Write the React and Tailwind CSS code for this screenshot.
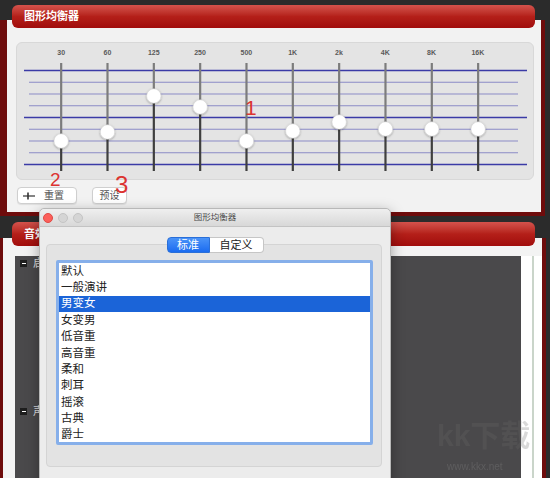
import React from 'react';

const freqs = ['30', '60', '125', '250', '500', '1K', '2k', '4K', '8K', '16K'];
// knob y positions (svg coords)
const knobs = [81, 72, 36, 47, 81, 71, 62, 69, 69, 69];
const presets = ['默认', '一般演讲', '男变女', '女变男', '低音重', '高音重', '柔和', '刺耳', '摇滚', '古典', '爵士'];

function EqGraph() {
  const thick = [10.5, 57.5, 104.5];
  const thin = [22.25, 34, 45.75, 69.25, 81, 92.75];
  return (
    <svg width="518" height="116" viewBox="0 0 518 116" className="block">
      <defs>
        <filter id="knobShadow" x="-50%" y="-50%" width="200%" height="200%">
          <feDropShadow dx="0" dy="0.8" stdDeviation="0.9" floodColor="#000" floodOpacity="0.35" />
        </filter>
      </defs>
      {thin.map((y) => (
        <line key={y} x1="12" x2="501" y1={y} y2={y} stroke="#8b8bc6" strokeWidth="1" />
      ))}
      {thick.map((y) => (
        <line key={y} x1="7" x2="510" y1={y} y2={y} stroke="#3b3ba6" strokeWidth="1.6" />
      ))}
      {knobs.map((ky, i) => {
        const x = 44.17 + i * 46.33;
        return (
          <g key={i}>
            <line x1={x} x2={x} y1="3" y2={ky} stroke="#7c7c7c" strokeWidth="2.2" />
            <line x1={x} x2={x} y1={ky} y2="111" stroke="#3f3f3f" strokeWidth="2.2" />
            <circle cx={x} cy={ky} r="7.2" fill="#fff" stroke="#d0d0d0" strokeWidth="0.5" filter="url(#knobShadow)" />
          </g>
        );
      })}
    </svg>
  );
}

export default function App() {
  return (
    <div className="relative w-[550px] h-[478px] overflow-hidden bg-[#2b2b2b] font-['Liberation_Sans','Noto_Sans_CJK_SC',sans-serif]">
      {/* 上半部分：图形均衡器 */}
      <div className="pt-[5px]">
        <div className="relative z-10 ml-[12px] w-[523px] h-[23px] rounded-[6px] bg-gradient-to-b from-[#d4524c] via-[#b41f19] to-[#a10c0c] flex items-center pl-[12px] text-white text-[11px] font-bold">
          图形均衡器
        </div>
        <div className="-mt-[8px] w-[545px] h-[196px] border-l-[7px] border-r-[4px] border-b-[4px] border-[#6e0c0c] bg-[#f2f2f2] pl-[9px] pt-[22px]">
          <div className="w-[518px] h-[138px] rounded-[6px] bg-[#e4e4e4] border border-[#d8d8d8] pt-[5px]">
            <div className="ml-[21px] w-[463px] grid grid-cols-10 h-[10px] leading-[10px] text-[7px] font-bold text-[#5a5a5a]">
              {freqs.map((f) => (
                <div key={f} className="text-center">{f}</div>
              ))}
            </div>
            <div className="mt-[2px]">
              <EqGraph />
            </div>
          </div>
          <div className="mt-[7px] ml-[1px] flex gap-[15px]">
            <button className="w-[60px] h-[17px] rounded-[4px] bg-white border border-[#cfcfcf] shadow-[0_1px_1px_rgba(0,0,0,0.08)] flex items-center pl-[5px] gap-[9px] text-[10px] text-[#555]">
              <svg width="12" height="8" viewBox="0 0 12 8">
                <line x1="0" x2="12" y1="4" y2="4" stroke="#333" strokeWidth="1.2" />
                <line x1="5" x2="5" y1="0.5" y2="7.5" stroke="#333" strokeWidth="1.6" />
              </svg>
              重置
            </button>
            <button className="w-[35px] h-[17px] rounded-[4px] bg-white border border-[#cfcfcf] shadow-[0_1px_1px_rgba(0,0,0,0.08)] flex items-center justify-center text-[10px] text-[#555]">
              预设
            </button>
          </div>
        </div>
      </div>

      {/* 下半部分：音效 */}
      <div className="mt-[6px]">
        <div className="relative z-10 ml-[12px] w-[523px] h-[24px] rounded-[6px] bg-gradient-to-b from-[#d4524c] via-[#b41f19] to-[#a10c0c] flex items-center pl-[12px] text-white text-[11px] font-bold">
          音效设置
        </div>
        <div className="-mt-[8px] w-[546px] h-[260px] border-l-[3px] border-r-[4px] border-[#6e0c0c] bg-[#f3f3f3] pl-[12px] pt-[18px] flex">
          <div className="w-[506px] h-full bg-[#4a494b] pl-[5px] pt-[3px] text-[11px] text-[#ddd]">
            <div className="flex items-center gap-[6px] h-[8px]">
              <span className="w-[7px] h-[7px] bg-[#1e1e1e] flex items-center justify-center">
                <span className="w-[4px] h-[1px] bg-white" />
              </span>
              <span>启用</span>
            </div>
            <div className="mt-[140px] flex items-center gap-[6px] h-[8px]">
              <span className="w-[7px] h-[7px] bg-[#1e1e1e] flex items-center justify-center">
                <span className="w-[4px] h-[1px] bg-white" />
              </span>
              <span>声道</span>
            </div>
          </div>
          <div className="w-[11px] bg-white" />
          <div className="w-[2px] bg-[#cad5ca]" />
          <div className="flex-1 bg-white" />
        </div>
      </div>

      {/* 水印 */}
      <div className="absolute left-[437px] top-[421px] text-[30px] font-bold text-[#6a6a6a] opacity-25 leading-none">kk下载</div>
      <div className="absolute left-[447px] top-[462px] text-[10px] text-[#8a8a8a] opacity-30 leading-none">www.kkx.net</div>

      {/* 标注 */}
      <div className="absolute left-[245px] top-[97px] text-[21px] leading-none text-[#dc3431]">1</div>
      <div className="absolute left-[50px] top-[170px] text-[19px] leading-none text-[#dc3431]">2</div>
      <div className="absolute left-[115px] top-[173px] text-[24px] leading-none text-[#dc3431]">3</div>

      {/* 对话框 */}
      <div className="absolute z-20 left-[39px] top-[208px] w-[352px] h-[280px] bg-[#ececec] border border-[#b8b8b8] rounded-t-[5px] shadow-[0_4px_14px_rgba(0,0,0,0.35)]">
        <div className="h-[18px] grid grid-cols-[1fr_auto_1fr] items-center rounded-t-[5px] bg-gradient-to-b from-[#efefef] to-[#d8d8d8] border-b border-[#c3c3c3]">
          <div className="flex items-center gap-[5px] pl-[3px]">
            <span className="w-[10px] h-[10px] rounded-full bg-[#fc5f5a] border border-[#df4a45]" />
            <span className="w-[10px] h-[10px] rounded-full bg-[#d5d5d5] border border-[#c4c4c4]" />
            <span className="w-[10px] h-[10px] rounded-full bg-[#d5d5d5] border border-[#c4c4c4]" />
          </div>
          <div className="text-[8.5px] text-[#4a4a4a]">图形均衡器</div>
          <div />
        </div>
        <div className="relative z-10 mt-[10px] mx-auto w-[97px] h-[16px] flex text-[11px]">
          <div className="w-[43px] rounded-l-[4px] bg-gradient-to-b from-[#4a93f8] to-[#1a6bf0] text-white flex items-center justify-center border border-[#2a6fd8]">
            标准
          </div>
          <div className="flex-1 rounded-r-[4px] bg-white text-[#222] flex items-center justify-center border border-l-0 border-[#c6c6c6]">
            自定义
          </div>
        </div>
        <div className="-mt-[9px] ml-[6px] w-[336px] h-[223px] rounded-[4px] bg-[#e3e3e3] border border-[#d4d4d4] pt-[15px] pl-[9px]">
          <div className="w-[317px] h-[185px] bg-white border-[3px] border-[#86afea] rounded-[2px]">
            {presets.map((p, i) => (
              <div
                key={p}
                className={
                  i === 2
                    ? 'h-[16.4px] flex items-center pl-[2px] text-[11.5px] bg-[#1b64d8] text-white'
                    : 'h-[16.4px] flex items-center pl-[2px] text-[11.5px] text-[#222]'
                }
              >
                {p}
              </div>
            ))}
          </div>
        </div>
      </div>
    </div>
  );
}
